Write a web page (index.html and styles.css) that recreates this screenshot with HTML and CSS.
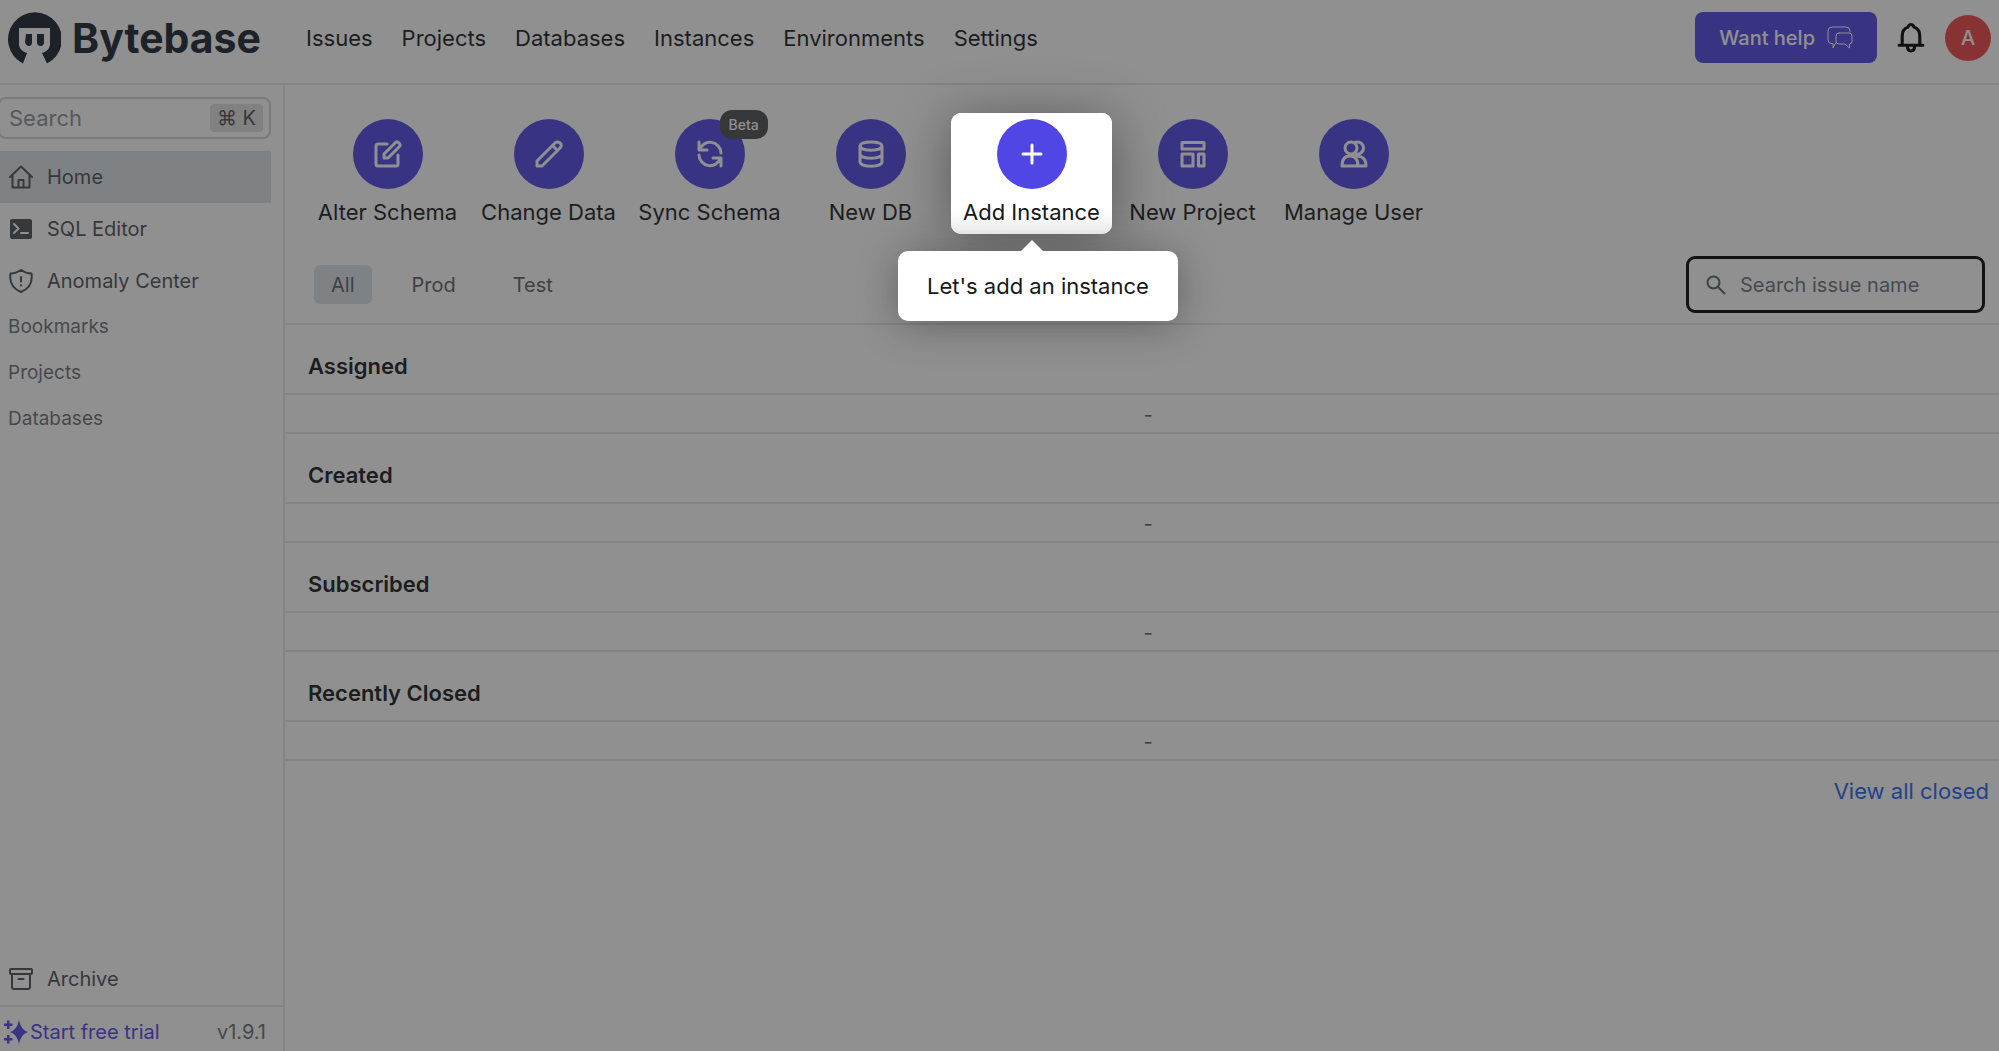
FILE: index.html
```html
<!DOCTYPE html>
<html lang="en">
<head>
<meta charset="utf-8">
<title>Bytebase</title>
<link rel="stylesheet" href="styles.css">
</head>
<body>
<header class="topbar">
  <a class="brand" href="#">
    <svg class="brand-mark" viewBox="0 0 54 52" aria-hidden="true">
      <path fill="#18202f" fill-rule="evenodd" d="M16 51.500A27 27 0 1 1 40 51.500L35 41Q42 39 43 33V16H12V33Q13 39 20 41ZM19 22H25V30Q25 34 22 34Q19 34 18 30ZM30 22H37V30Q37 34 33.500 34Q30 34 30 30Z"/>
    </svg>
    <span class="brand-name">Bytebase</span>
  </a>
  <nav class="topnav" aria-label="Main">
    <a href="#">Issues</a><a href="#">Projects</a><a href="#">Databases</a><a href="#">Instances</a><a href="#">Environments</a><a href="#">Settings</a>
  </nav>
  <div class="tools">
    <button class="help" type="button">Want help
      <svg class="help-icon" viewBox="0 0 26 24" aria-hidden="true"><path d="M9 16.500 6 22V17.500H4Q1 17 1 14V5Q1 1 5 1H19Q23 1 23 5V6M12 7H22Q25 7 25 10V15Q25 18 22.500 18V22L18 18H12Q9 18 9 15V10Q9 7 12 7Z"/></svg>
    </button>
    <button class="bell" type="button" aria-label="Notifications">
      <svg viewBox="0 0 26 29" aria-hidden="true"><path d="M1.500 21.500H24.500M4.500 21V12.500Q4.500 6 10 4Q11 1.500 13 1.500T16 4Q21.500 6 21.500 12.500V21M9.500 22Q9.500 27 13 27T16.500 22"/></svg>
    </button>
    <button class="avatar" type="button">A</button>
  </div>
</header>
<div class="layout">
  <aside class="sidebar">
    <label class="quick"><input type="text" placeholder="Search" aria-label="Search"><kbd>⌘ K</kbd></label>
    <nav class="side-nav" aria-label="Workspace">
      <a class="side-link current" href="#"><svg viewBox="0 0 24 24" aria-hidden="true"><path d="M1 12 12 1.500 23 12M3.500 10V22.500H20.500V10M9.500 22V15H14.500V22"/></svg>Home</a>
      <a class="side-link" href="#"><svg viewBox="0 0 24 24" aria-hidden="true"><rect class="solid" x="1" y="2" width="22" height="20" rx="2"/><path class="knockout" d="M5 7 9.500 11.500 5 16M12 16H19"/></svg>SQL Editor</a>
      <a class="side-link" href="#"><svg viewBox="0 0 24 24" aria-hidden="true"><path d="M12 1Q17 4.500 22.500 4.500Q24.500 18 12 23Q-.5 18 1.500 4.500Q7 4.500 12 1ZM12 8V12.500M12 16V16.500"/></svg>Anomaly Center</a>
    </nav>
    <nav class="groups" aria-label="Shortcuts"><a href="#">Bookmarks</a><a href="#">Projects</a><a href="#">Databases</a></nav>
    <a class="side-link archive" href="#"><svg viewBox="0 0 24 24" aria-hidden="true"><path d="M2 2H22Q23 2 23 3V6Q23 7 22 7H2Q1 7 1 6V3Q1 2 2 2ZM3 7V20Q3 22 5 22H19Q21 22 21 20V7M9.500 12H14.500"/></svg>Archive</a>
    <div class="side-foot">
      <a class="trial" href="#"><svg viewBox="0 0 24 24" aria-hidden="true"><path d="M15 0Q17 10 24 12Q17 14 15 24Q13 14 6 12Q13 10 15 0ZM3 .5H5.500V3.500H8.500V6H5.500V9H3V6H0V3.500H3ZM3 15H5.500V18H8.500V20.500H5.500V23.500H3V20.500H0V18H3Z"/></svg>Start free trial</a>
      <span class="version">v1.9.1</span>
    </div>
  </aside>
  <main class="content">
    <div class="actions">
      <button class="action" type="button"><span class="disc"><svg viewBox="0 0 28 28" aria-hidden="true"><path d="M13 4H4Q2 4 2 6V24Q2 26 4 26H22Q24 26 24 24V15M10 14 21.500 2.500Q23 1 25 3T25.500 6.500L14 18H10Z"/></svg></span>Alter Schema</button>
      <button class="action" type="button"><span class="disc"><svg viewBox="0 0 28 28" aria-hidden="true"><path d="M2 21 20 3Q22.500 1 25 3T25 8L7 26H2ZM17.500 5.500 22.500 10.500"/></svg></span>Change Data</button>
      <button class="action" type="button"><span class="disc"><svg viewBox="0 0 28 28" aria-hidden="true"><path d="M3 2V10H11M3.500 10A11 11 0 0 1 25 13M25 26V18H17M24.500 18A11 11 0 0 1 3 15"/></svg><span class="beta">Beta</span></span>Sync Schema</button>
      <button class="action" type="button"><span class="disc"><svg viewBox="0 0 28 28" aria-hidden="true"><path d="M3 6C3 .5 25 .5 25 6S3 11.500 3 6V22C3 27.500 25 27.500 25 22V6M3 14C3 19.500 25 19.500 25 14"/></svg></span>New DB</button>
      <div class="tour-stop">
        <button class="action" type="button" aria-describedby="tour-tip"><span class="disc"><svg viewBox="0 0 28 28" aria-hidden="true"><path d="M14 5V23M5 14H23"/></svg></span>Add Instance</button>
        <div class="tour-tip" id="tour-tip" role="tooltip">Let's add an instance</div>
      </div>
      <button class="action" type="button"><span class="disc"><svg viewBox="0 0 28 28" aria-hidden="true"><path d="M3 2.500H25V9H3ZM3 14H14V26H3ZM19.500 14H25V26H19.500Z"/></svg></span>New Project</button>
      <button class="action" type="button"><span class="disc"><svg viewBox="0 0 28 28" aria-hidden="true"><circle cx="11" cy="8" r="6"/><path d="M14.500 2.800A6 6 0 1 1 14.500 13.200M2 26Q2 16 10 16T18 26ZM15 16.500Q26 15 26 26H18"/></svg></span>Manage User</button>
    </div>
    <div class="filters">
      <div class="tabs">
        <button class="tab selected" type="button">All</button><button class="tab" type="button">Prod</button><button class="tab" type="button">Test</button>
      </div>
      <label class="issue-search"><svg viewBox="0 0 20 20" aria-hidden="true"><circle cx="7.500" cy="7.500" r="6"/><path d="M12 12 18.500 18.500"/></svg><input type="text" placeholder="Search issue name" aria-label="Search issue name"></label>
    </div>
    <section class="issues"><h2>Assigned</h2><p>-</p></section>
    <section class="issues"><h2>Created</h2><p>-</p></section>
    <section class="issues"><h2>Subscribed</h2><p>-</p></section>
    <section class="issues"><h2>Recently Closed</h2><p>-</p></section>
    <a class="view-all" href="#">View all closed</a>
  </main>
</div>
</body>
</html>
```
FILE: styles.css
```css
* { box-sizing: border-box; }

body {
  margin: 0;
  min-height: 100vh;
  display: flex;
  flex-direction: column;
  overflow-x: hidden;
  background: #fff;
  color: #16181d;
  font: 22px/30px Inter, "Liberation Sans", sans-serif;
}

a { color: inherit; text-decoration: none; }
button, input { font: inherit; color: inherit; }
button { border: 0; padding: 0; background: none; }
svg {
  flex: none;
  fill: none;
  stroke: currentColor;
  stroke-width: 2;
  stroke-linecap: round;
  stroke-linejoin: round;
}

/* Top bar */
.topbar {
  display: flex;
  align-items: center;
  height: 85px;
  padding: 0 8px 8px 7px;
  border-bottom: 2px solid #e5e7eb;
}
.brand { display: flex; align-items: center; gap: 11px; width: 299px; color: #18202f; }
.brand-mark { width: 54px; height: 52px; stroke: none; }
.brand-name { font-size: 41px; line-height: 52px; font-weight: 700; }
.topnav { display: flex; gap: 29px; }
.tools { display: flex; align-items: center; gap: 20px; margin-left: auto; }
.help {
  display: flex;
  align-items: center;
  gap: 12px;
  height: 51px;
  padding: 0 24px;
  border-radius: 8px;
  background: #4f46e5;
  color: #fff;
  font-size: 20px;
  font-weight: 500;
}
.help-icon { width: 26px; height: 24px; stroke-width: 1; }
.bell { display: flex; color: #000; }
.bell svg { width: 28px; height: 30px; stroke-width: 3; }
.avatar {
  width: 46px;
  height: 46px;
  border-radius: 50%;
  background: #ef4444;
  color: #fff;
  font-size: 20px;
  font-weight: 500;
}

/* Sidebar */
.layout { flex: 1; display: flex; }
.sidebar {
  flex: none;
  display: flex;
  flex-direction: column;
  width: 285px;
  padding-top: 12px;
  border-right: 2px solid #e5e7eb;
  color: #4b4f57;
  font-size: 20px;
}
.quick {
  display: flex;
  align-items: center;
  height: 42px;
  margin: 0 12px 12px -2px;
  padding: 0 6px 0 9px;
  border: 2px solid #d1d5db;
  border-radius: 8px;
}
.quick input {
  flex: 1;
  min-width: 0;
  border: 0;
  padding: 0;
  outline: 0;
  background: none;
  font-size: 22px;
}
.quick input::placeholder { color: #8b8f96; }
.quick kbd {
  padding: 0 7px;
  border-radius: 4px;
  background: #e0e1e3;
  font: 20px/28px Inter, "DejaVu Sans", sans-serif;
}
.side-link {
  display: flex;
  align-items: center;
  gap: 14px;
  height: 52px;
  margin-right: 12px;
  padding-left: 9px;
}
.side-link svg { width: 24px; height: 24px; }
.current { background: #dde3e7; }
.solid { fill: currentColor; stroke: none; }
.knockout { stroke: #fff; }
.groups {
  display: flex;
  flex-direction: column;
  gap: 16px;
  padding: 5px 8px;
  color: #6b6f77;
  font-size: 19px;
}
.archive { margin-top: auto; }
.side-foot {
  display: flex;
  align-items: center;
  justify-content: space-between;
  height: 46px;
  border-top: 2px solid #e5e7eb;
  padding: 6px 17px 0 4px;
}
.trial { display: flex; align-items: center; gap: 2px; color: #4f46e5; }
.trial svg { width: 24px; height: 24px; fill: currentColor; stroke: none; }
.version { color: #6b6f77; }

/* Quick actions */
.content { flex: 1; min-width: 0; display: flex; flex-direction: column; }
.actions {
  display: grid;
  grid-template-columns: repeat(7, 161px);
  padding: 28px 22px 0;
}
.action {
  display: flex;
  flex-direction: column;
  align-items: center;
  gap: 8px;
  width: 100%;
  height: 121px;
  padding-top: 6px;
  white-space: nowrap;
}
.disc {
  position: relative;
  display: grid;
  place-items: center;
  width: 70px;
  height: 70px;
  border-radius: 50%;
  background: #4f46e5;
  color: #fff;
}
.disc svg { width: 28px; height: 28px; stroke-width: 3; }
.beta {
  position: absolute;
  top: -9px;
  left: 45px;
  padding: 0 9px;
  border-radius: 12px;
  background: #4a4c50;
  font-size: 14px;
  font-weight: 500;
  line-height: 29px;
}

/* The tour stop stays bright while its shadow dims the rest of the page */
.tour-stop {
  position: relative;
  z-index: 10;
  border-radius: 10px;
  background: linear-gradient(#fff 80%, #f3f3f3);
  box-shadow: 0 6px 56px rgba(0, 0, 0, .4), 0 0 0 5000px rgba(33, 33, 33, .5);
}
.tour-tip {
  position: absolute;
  top: 138px;
  left: -53px;
  padding: 20px 29px;
  border-radius: 10px;
  background: #fff;
  box-shadow: 0 4px 40px rgba(33, 33, 33, .4);
  white-space: nowrap;
}
.tour-tip::before {
  content: "";
  position: absolute;
  top: -11px;
  left: 122px;
  border: 12px solid transparent;
  border-top: 0;
  border-bottom-color: #fff;
}

/* Filters */
.filters {
  display: flex;
  align-items: center;
  justify-content: space-between;
  height: 91px;
  padding: 12px 14px 0 29px;
  border-bottom: 2px solid #e5e7eb;
  color: #5b5f67;
  font-size: 20px;
}
.tabs { display: flex; gap: 23px; }
.tab { height: 39px; padding: 0 17px; border-radius: 6px; }
.selected { background: #dde3e7; }
.issue-search {
  display: flex;
  align-items: center;
  gap: 14px;
  width: 299px;
  height: 57px;
  padding: 0 17px;
  border: 3px solid #050505;
  border-radius: 9px;
}
.issue-search svg { width: 20px; height: 20px; }
.issue-search input { flex: 1; min-width: 0; padding: 0; border: 0; outline: 0; background: none; }
.issue-search input::placeholder { color: #6b7280; }

/* Issue lists */
.issues h2 {
  margin: 0;
  padding: 26px 23px 12px;
  border-bottom: 2px solid #e5e7eb;
  font-size: 22px;
  line-height: 30px;
  font-weight: 600;
}
.issues p {
  margin: 0;
  padding: 5px 0 2px 12px;
  border-bottom: 2px solid #e5e7eb;
  color: #5b5f67;
  font-size: 20px;
  text-align: center;
}
.view-all { align-self: flex-end; padding: 15px 10px; color: #2563eb; }
```
